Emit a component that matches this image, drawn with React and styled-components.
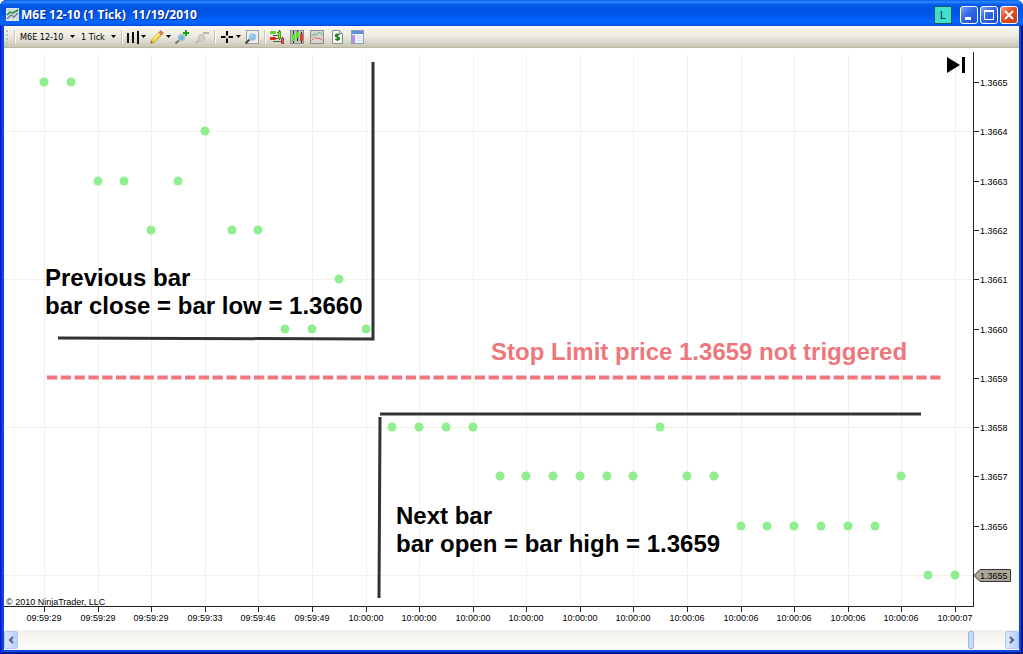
import React from "react";
import styled, { createGlobalStyle } from "styled-components";

const GlobalStyle = createGlobalStyle`
    * {
        box-sizing: border-box;
    }
    body {
        margin: 0;
        background: #ffffff;
        font-family: "Liberation Sans", Arial, sans-serif;
    }
`;

// WINDOW
const Window = styled.div`
    display: flex;
    flex-direction: column;
    min-height: 100vh;
    padding: 0 4px 4px;
    border-radius: 7px 7px 0 0;
    background: #0a48e0;
    box-shadow: inset 1px 0 #0019cf, inset -1px -1px #00138c, inset 2px 0 #0831d9, inset -2px -2px #001ea0;
    overflow: hidden;
`;

const TitleBar = styled.header`
    display: flex;
    align-items: center;
    height: 26px;
    margin: 0 -4px;
    padding: 3px 5px 0 6px;
    background: linear-gradient(#0a5be8 0, #2e8bff 2px, #0a5ff0 4px, #0053e1 8px, #0055e6 14px, #0364fb 20px, #0366ff 23px, #0048d8 100%);
`;

const Title = styled.h1`
    flex: 1;
    margin: 0 0 0 2px;
    color: #ffffff;
    font-family: "Open Sans", "Trebuchet MS", sans-serif;
    font-size: 12px;
    font-weight: 700;
    line-height: 18px;
    white-space: pre;
    text-shadow: 1px 1px #0a2a8c;
`;

const Caption = styled.div`
    display: flex;
    gap: 2px;
`;

const CaptionButton = styled.button`
    display: flex;
    align-items: center;
    justify-content: center;
    width: 18px;
    height: 18px;
    padding: 0;
    border: 1px solid #ffffff;
    border-radius: 3px;
    background: ${(p) => (p.$close
        ? "linear-gradient(135deg, #f0a088, #e2532c 40%, #c83c10)"
        : "linear-gradient(135deg, #7ea6f5, #3468e4 45%, #1c4cc8)")};
`;

const LinkButton = styled.button`
    width: 18px;
    height: 18px;
    margin-right: 6px;
    padding: 0;
    border: 1px solid #145c5c;
    background: #40e0d0;
    color: #0a2c2c;
    font-family: "Liberation Sans", Arial, sans-serif;
    font-size: 11px;
    line-height: 16px;
`;

// TOOLBAR
const Toolbar = styled.div`
    display: flex;
    align-items: center;
    height: 22px;
    padding: 0 2px;
    border-bottom: 1px solid #bab69f;
    background: linear-gradient(#fbfaf6, #ebe9e0 50%, #c9c6b4);
`;

const Grip = styled.span`
    width: 2px;
    height: 14px;
    margin-right: 1px;
    background: repeating-linear-gradient(#c4c0ae 0 2px, transparent 2px 4px);
`;

const Divider = styled.span`
    width: 2px;
    height: 14px;
    margin: 0 4px 0 5px;
    border-left: 1px solid #c9c5b4;
    border-right: 1px solid #ffffff;
`;

const SelectLabel = styled.label`
    display: flex;
    align-items: center;
    margin-right: ${(p) => (p.$last ? 0 : 6)}px;
`;

const Select = styled.select`
    appearance: none;
    width: ${(p) => p.$width}px;
    padding: 0;
    border: 0;
    background: transparent;
    color: #000000;
    font-family: "DejaVu Sans Condensed", Tahoma, sans-serif;
    font-size: 9px;
    line-height: 14px;
`;

const ToolButton = styled.button`
    display: flex;
    align-items: center;
    gap: 2px;
    height: 18px;
    margin-right: ${(p) => (p.$last ? 0 : p.$menu ? 4 : 6)}px;
    padding: 0;
    border: 0;
    background: transparent;
`;

const ArrowSvg = styled.svg`
    width: 5px;
    height: 3px;
    flex: none;
`;

const Arrow = () => <ArrowSvg viewBox="0 0 5 3"><path d="M0 0h5L2.500 3z" /></ArrowSvg>;

// CHART
const ChartArea = styled.main`
    flex: 1;
    background: #ffffff;
`;

const ChartSvg = styled.svg`
    display: block;
    width: 100%;
    height: auto;
`;

const AxisText = styled.text`
    fill: #000000;
    font-size: 9px;
    text-anchor: ${(p) => p.$anchor || "start"};
`;

const Note = styled.text`
    fill: ${(p) => p.$color || "#000000"};
    font-size: 24px;
    font-weight: 700;
`;

// SCROLLBAR
const ScrollBar = styled.div`
    display: flex;
    align-items: center;
    height: 20px;
    background: linear-gradient(#f1f0ea, #fefefb);
`;

const ScrollButton = styled.button`
    display: flex;
    align-items: center;
    justify-content: center;
    width: 14px;
    height: 18px;
    padding: 0;
    border: 1px solid #b4c8f6;
    border-radius: 2px;
    background: linear-gradient(90deg, #dce6ff, #b9cdfa);
`;

const ScrollRange = styled.input`
    flex: 1;
    appearance: none;
    height: 18px;
    margin: 0;
    background: transparent;
    &::-webkit-slider-thumb {
        appearance: none;
        width: 6px;
        height: 18px;
        border: 1px solid #9ab5f0;
        border-radius: 2px;
        background: #c8d8fc;
    }
`;

const icon = { width: 14, height: 14, viewBox: "0 0 14 14" };

const TitleIcon = () => (
    <svg width="13" height="13" viewBox="0 0 13 13">
        <rect width="13" height="13" fill="#e8ecec" />
        <path d="M0 2h13M0 6h13M0 10h13M3 0v13M7 0v13M11 0v13" stroke="#c3cdd2" fill="none" />
        <path d="M1 11l4-4 3 2 4-4" stroke="#6f8396" strokeWidth="1.500" fill="none" />
        <path d="M1 7l3-3 3 1 5-3" stroke="#139034" strokeWidth="1.500" fill="none" />
    </svg>
);

const BarsIcon = () => (
    <svg {...icon} width="12" viewBox="0 0 12 14">
        <path d="M1 3v10M6 2v11M11 1v13" stroke="#111" strokeWidth="2" />
    </svg>
);

const PencilIcon = () => (
    <svg {...icon}>
        <path d="M1 13l1-3.500 7-7 2.500 2.500-7 7z" fill="#f8d830" stroke="#c09a28" />
        <path d="M3.500 9.500l6-6" stroke="#fff49a" strokeWidth="1.500" />
        <path d="M9 2.500L11 .7l2.300 2.300-1.800 2z" fill="#e77d68" stroke="#c06a50" />
        <path d="M.5 13.500l.8-2.500 1.700 1.700z" fill="#6b5330" />
    </svg>
);

const ZoomInIcon = () => (
    <svg {...icon}>
        <path d="M.5 13.500l4-3.500" stroke="#777" strokeWidth="2" />
        <circle cx="6.500" cy="7.500" r="3.500" fill="#8fc4e5" stroke="#b8c6ce" />
        <circle cx="6.500" cy="8" r="2" fill="#6db0dc" />
        <path d="M11 0v6M8 3h6" stroke="#12a51c" strokeWidth="2" />
    </svg>
);

const ZoomOutIcon = () => (
    <svg {...icon}>
        <path d="M.5 13.500l4-3.500" stroke="#b9b8b0" strokeWidth="2" />
        <circle cx="6.500" cy="8" r="3.500" fill="#cfcfca" stroke="#c2c1b9" />
        <path d="M8 3h6" stroke="#b4b3aa" strokeWidth="2" />
    </svg>
);

const CrossIcon = () => (
    <svg {...icon}>
        <path d="M7 1v4.500M7 8.500V13M1 7h4.500M8.500 7H13" stroke="#000" strokeWidth="2" />
    </svg>
);

const ZoomBoxIcon = () => (
    <svg {...icon}>
        <rect x="1.500" y=".5" width="12" height="13" fill="#f0f1ef" stroke="#999c98" />
        <path d="M.5 13.500l4-4" stroke="#444" strokeWidth="2" />
        <circle cx="7.500" cy="7" r="3.500" fill="#82bfe5" stroke="#b1c9d6" />
        <circle cx="7" cy="6" r="1.500" fill="#a9d6f0" />
    </svg>
);

const TraderIcon = () => (
    <svg {...icon}>
        <path d="M3 5.500h8M3 11.500h8M7 2.500h3M6 8.500h4" stroke="#555" />
        <rect x="0" y="1" width="6" height="3" rx="1" fill="#55dc1a" />
        <rect x="0" y="7" width="6" height="3" rx="1" fill="#e5241c" />
        <path d="M9.500 0v10M12.500 7v7" stroke="#444" />
        <rect x="8.500" y="1.500" width="2" height="7" fill="#70f030" stroke="#4aa820" />
        <rect x="11.500" y="8.500" width="2" height="5" fill="#e25b55" stroke="#a54239" />
    </svg>
);

const CandlesIcon = () => (
    <svg {...icon}>
        <rect x=".5" y=".5" width="13" height="13" fill="#c0c3bd" stroke="#8b8f8b" />
        <path d="M3.500 1v12M7.500 1v10M11.500 2v11" stroke="#222" />
        <rect x="2" y="4" width="3" height="7" fill="#57e02a" />
        <rect x="6" y="2" width="3" height="6" fill="#57e02a" />
        <rect x="10" y="4" width="3" height="7" fill="#dd4038" />
    </svg>
);

const IndicatorIcon = () => (
    <svg {...icon}>
        <rect x=".5" y=".5" width="13" height="13" fill="#d3d5d3" stroke="#8b8f8f" />
        <path d="M1.500 6l3-2 2 1 3-3 3 3" stroke="#50b088" fill="none" />
        <path d="M1.500 10.500l3-3 3 1 2.500 0 2.500 2" stroke="#e8645c" fill="none" />
    </svg>
);

const StrategyIcon = () => (
    <svg {...icon}>
        <path d="M2.500.5h7l3 3v10h-10z" fill="#fafcf8" stroke="#8b918a" />
        <path d="M9.500.5v3h3" fill="#d9ddd7" stroke="#8b918a" />
        <path d="M9.500 5c-1-1-4-1-4 .7 0 1.600 4 1 4 2.800 0 1.500-3 1.500-4.200.5M7.500 3.500v7.500" stroke="#147b1b" strokeWidth="1.500" fill="none" />
    </svg>
);

const PanelIcon = () => (
    <svg {...icon}>
        <rect x="1.500" y=".5" width="12" height="13" fill="#eef4fa" stroke="#8f9bb8" />
        <path d="M2 2.500h11" stroke="#5f90e0" strokeWidth="3" />
        <rect x="2" y="5" width="3" height="8" fill="#b48cf0" />
        <path d="M7 6.500h5M7 8.500h5M7 10.500h5" stroke="#d2dfec" />
    </svg>
);

// last two digits of the traded price, one entry per tick
const ticks = [
    65, 65, 63, 63, 62, 63, 64, 62, 62, 60, 60, 61, 60, 58, 58, 58, 58, 57,
    57, 57, 57, 57, 57, 58, 57, 57, 56, 56, 56, 56, 56, 56, 57, 55, 55,
];

const times = [
    "09:59:29", "09:59:29", "09:59:29", "09:59:33", "09:59:46", "09:59:49",
    "10:00:00", "10:00:00", "10:00:00", "10:00:00", "10:00:00", "10:00:00",
    "10:00:06", "10:00:06", "10:00:06", "10:00:06", "10:00:06", "10:00:07",
];

const prices = [65, 64, 63, 62, 61, 60, 59, 58, 57, 56, 55];

const tickX = (index) => Math.round(40 + (index * 911) / 34);
const priceY = (price) => Math.round(34 + ((65 - price) * 493) / 10);

const Chart = () => (
    <ChartSvg viewBox="0 0 1015 582" role="img" aria-label="M6E 12-10 tick chart">
        <g stroke="#f2f1e6" shapeRendering="crispEdges">
            {times.map((time, i) => (
                <line key={i} x1={tickX(i * 2) + 0.5} x2={tickX(i * 2) + 0.5} y1="6" y2="558" />
            ))}
            {[64, 61, 58, 55].map((p) => (
                <line key={p} x1="0" x2="969" y1={priceY(p) + 0.5} y2={priceY(p) + 0.5} />
            ))}
        </g>

        {ticks.map((p, i) => (
            <circle key={i} cx={tickX(i)} cy={priceY(p)} r="4.500" fill="#90ee90" />
        ))}

        <g stroke="#222" shapeRendering="crispEdges">
            <path d="M969.500 4v555M0 558.500h970" fill="none" />
            {times.map((time, i) => (
                <line key={i} x1={tickX(i * 2) + 0.5} x2={tickX(i * 2) + 0.5} y1="559" y2="564" />
            ))}
            {prices.map((p) => (
                <line key={p} x1="970" x2="975" y1={priceY(p) + 0.5} y2={priceY(p) + 0.5} />
            ))}
        </g>
        <path d="M970 527.500l6-6h30.500v12H976z" fill="#aca899" stroke="#333" />

        {times.map((time, i) => (
            <AxisText key={i} x={tickX(i * 2)} y="573" $anchor="middle">{time}</AxisText>
        ))}
        {prices.map((p) => (
            <AxisText key={p} x="976" y={priceY(p) + 4}>{"1.36" + p}</AxisText>
        ))}
        <AxisText x="2" y="557">© 2010 NinjaTrader, LLC</AxisText>

        <g fill="none" stroke="#333333" strokeWidth="3">
            <path d="M54 290l315 1V14" />
            <path d="M376 366h541M376 369l-1 181" />
        </g>
        <path d="M43 329.500h896" stroke="#ee777c" strokeWidth="4" strokeDasharray="10.300 3.500" />
        <Note x="41" y="238">Previous bar</Note>
        <Note x="41" y="266">bar close = bar low = 1.3660</Note>
        <Note x="392" y="476">Next bar</Note>
        <Note x="392" y="504">bar open = bar high = 1.3659</Note>
        <Note x="487" y="312" $color="#ee777c">Stop Limit price 1.3659 not triggered</Note>

        <path d="M943 9l13 8-13 8zM958 9h3v16h-3z" fill="#000" />
    </ChartSvg>
);

class App extends React.Component {
    constructor(props) {
        super(props);
        this.state = { scroll: 968 };
    }

    render() {
        return (
            <>
                <GlobalStyle />
                <Window>
                    <TitleBar>
                        <TitleIcon />
                        <Title>{"M6E 12-10 (1 Tick)  11/19/2010"}</Title>
                        <Caption>
                            <LinkButton>L</LinkButton>
                            <CaptionButton aria-label="Minimize">
                                <svg width="12" height="12"><path d="M2 8h6v3H2z" fill="#fff" /></svg>
                            </CaptionButton>
                            <CaptionButton aria-label="Maximize">
                                <svg width="12" height="12"><path d="M1.500 2v8.500h9V2" stroke="#fff" fill="none" /><path d="M1 1h10v2H1z" fill="#fff" /></svg>
                            </CaptionButton>
                            <CaptionButton $close aria-label="Close">
                                <svg width="12" height="12"><path d="M2 2l8 8M10 2l-8 8" stroke="#fff" strokeWidth="2" /></svg>
                            </CaptionButton>
                        </Caption>
                    </TitleBar>

                    <Toolbar>
                        <Grip />
                        <Divider />
                        <SelectLabel>
                            <Select $width={50} aria-label="Instrument">
                                <option>M6E 12-10</option>
                            </Select>
                            <Arrow />
                        </SelectLabel>
                        <SelectLabel $last>
                            <Select $width={30} aria-label="Interval">
                                <option>1 Tick</option>
                            </Select>
                            <Arrow />
                        </SelectLabel>
                        <Divider />
                        <ToolButton aria-label="Chart style" $menu><BarsIcon /><Arrow /></ToolButton>
                        <ToolButton aria-label="Drawing tools" $menu><PencilIcon /><Arrow /></ToolButton>
                        <ToolButton aria-label="Zoom in"><ZoomInIcon /></ToolButton>
                        <ToolButton aria-label="Zoom out" $last><ZoomOutIcon /></ToolButton>
                        <Divider />
                        <ToolButton aria-label="Cross hair" $menu><CrossIcon /><Arrow /></ToolButton>
                        <ToolButton aria-label="Zoom frame" $last><ZoomBoxIcon /></ToolButton>
                        <Divider />
                        <ToolButton aria-label="Chart trader"><TraderIcon /></ToolButton>
                        <ToolButton aria-label="Data series"><CandlesIcon /></ToolButton>
                        <ToolButton aria-label="Indicators"><IndicatorIcon /></ToolButton>
                        <ToolButton aria-label="Strategies"><StrategyIcon /></ToolButton>
                        <ToolButton aria-label="Properties" $last><PanelIcon /></ToolButton>
                    </Toolbar>

                    <ChartArea>
                        <Chart />
                    </ChartArea>

                    <ScrollBar>
                        <ScrollButton aria-label="Scroll left">
                            <svg width="6" height="8"><path d="M5 1L2 4l3 3" stroke="#4d6185" strokeWidth="2" fill="none" /></svg>
                        </ScrollButton>
                        <ScrollRange
                            type="range"
                            min="0"
                            max="1000"
                            aria-label="Chart position"
                            value={this.state.scroll}
                            onChange={(e) => this.setState({ scroll: Number(e.target.value) })}
                        />
                        <ScrollButton aria-label="Scroll right">
                            <svg width="6" height="8"><path d="M1 1l3 3-3 3" stroke="#4d6185" strokeWidth="2" fill="none" /></svg>
                        </ScrollButton>
                    </ScrollBar>
                </Window>
            </>
        );
    }
}

export default App;
